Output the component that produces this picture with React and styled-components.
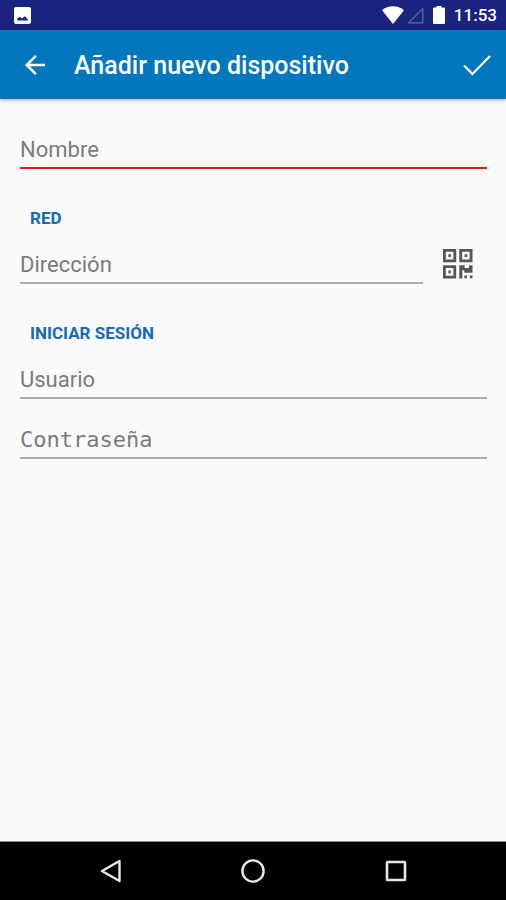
import { useState } from 'react';
import styled, { createGlobalStyle } from 'styled-components';
import { MdArrowBack } from 'react-icons/md';

const GlobalStyle = createGlobalStyle`
  * {
    box-sizing: border-box;
  }

  body {
    margin: 0;
    background: #fafafa;
    font-family: Roboto, sans-serif;
  }
`;

const Screen = styled.div`
  display: flex;
  flex-direction: column;
  min-height: 100vh;
`;

const StatusBar = styled.div`
  display: flex;
  align-items: center;
  justify-content: space-between;
  height: 30px;
  padding: 0 9px 0 14px;
  background: #1a237e;
  color: #fff;
`;

const StatusIcons = styled.div`
  display: flex;
  align-items: center;
`;

const Icon = styled.svg`
  display: block;
  flex: none;
  margin-right: ${({ $gap }) => $gap || 0}px;
`;

const Clock = styled.time`
  font-size: 17px;
  font-weight: 500;
  line-height: 32px;
`;

const AppBar = styled.header`
  display: flex;
  align-items: center;
  height: 69px;
  padding: 0 9px 0 15px;
  background: #0277bd;
  color: #fff;
  box-shadow: 0 1px 4px rgba(0, 0, 0, 0.35);
`;

const IconButton = styled.button`
  display: flex;
  align-items: center;
  justify-content: center;
  flex: none;
  width: 40px;
  height: 40px;
  padding: 0;
  border: 0;
  background: none;
  color: inherit;
  cursor: pointer;
`;

const Title = styled.h1`
  flex: 1;
  margin: 0;
  padding: 2px 0 0 19px;
  font-size: 25px;
  font-weight: 500;
  line-height: 40px;
`;

const Form = styled.form`
  flex: 1;
  padding: 30px 19px 30px 20px;
`;

const Field = styled.input`
  display: block;
  flex: 1;
  width: 100%;
  min-width: 0;
  height: 40px;
  padding: 2px 0 0;
  border: 0;
  border-bottom: 2px solid ${({ $invalid }) => ($invalid ? '#e01b1b' : '#acacac')};
  border-radius: 0;
  outline: none;
  background: none;
  color: #212121;
  font-family: ${({ $mono }) => ($mono ? "'DejaVu Sans Mono', monospace" : 'Roboto, sans-serif')};
  font-size: 22px;

  &::placeholder {
    color: #7a7a7a;
    opacity: 1;
  }

  & + & {
    margin-top: 20px;
  }
`;

const SectionTitle = styled.h2`
  margin: 37px 10px 14px;
  color: #1469b8;
  font-size: 17px;
  font-weight: 700;
  line-height: 24px;
`;

const AddressRow = styled.div`
  display: flex;
  align-items: center;
  gap: 15px;
  padding-right: 9px;
  color: #555;
`;

const NavBar = styled.nav`
  display: flex;
  height: 59px;
  padding: 0 39px 0 40px;
  border-top: 1px solid #8a8a8a;
  background: #000;
  color: #e8e8e8;
`;

const NavButton = styled.button`
  display: flex;
  flex: 1;
  align-items: center;
  justify-content: center;
  padding: 0;
  border: 0;
  background: none;
  color: inherit;
  cursor: pointer;
`;

const PictureIcon = () => (
  <Icon width="17" height="17" viewBox="0 0 17 17">
    <rect width="17" height="17" rx="2" fill="#fff" />
    <path d="M3.2 13.5v-2L6 9.8l2 1.8 2.6-2.4 3.2 3v1.3z" fill="#1a237e" />
  </Icon>
);

const WifiIcon = () => (
  <Icon width="22" height="18" viewBox="0 0 22 18" $gap={3}>
    <path d="M11 18 0 4.2C3 1.6 6.8.3 11 .3s8 1.3 11 3.9z" fill="#fff" />
  </Icon>
);

const SignalIcon = () => (
  <Icon width="17" height="17" viewBox="0 0 17 17" $gap={9}>
    <path d="M15.8 1.6v14.2H1.6z" fill="none" stroke="#6065ab" strokeWidth="1.3" />
  </Icon>
);

const BatteryIcon = () => (
  <Icon width="12" height="18" viewBox="0 0 12 18" $gap={9}>
    <path d="M3.5 0h5v1.4H11a1 1 0 0 1 1 1V17a1 1 0 0 1-1 1H1a1 1 0 0 1-1-1V2.400a1 1 0 0 1 1-1h2.500z" fill="#fff" />
  </Icon>
);

const CheckIcon = () => (
  <Icon width="28" height="22" viewBox="0 0 28 22">
    <path d="m1 11.500 8.500 8.500L27 2" fill="none" stroke="currentColor" strokeWidth="2.2" />
  </Icon>
);

const QrIcon = () => (
  <Icon width="30" height="30" viewBox="0 0 30 30">
    <g fill="none" stroke="currentColor" strokeWidth="2.8">
      <path d="M1.4 1.4h10.4v10.4H1.4zM17.700 1.400h10.400v10.400H17.700zM1.400 17.700h10.400v10.400H1.400z" />
    </g>
    <g fill="currentColor">
      <path d="M5.300 5.300h2.600v2.600H5.300zM21.600 5.300h2.600v2.600h-2.600zM5.300 21.600h2.600v2.600H5.300z" />
      <path d="M16.300 16.300h5.300V19h4.400v-2.700h3.500v7.500h-8.200v-2.600h-2v8.300h-3z" />
      <path d="M21.300 26.600H24v2.700h-2.700zM26.800 26.600h2.700v2.700h-2.700z" />
    </g>
  </Icon>
);

const App = () => {
  const [device, setDevice] = useState({ name: '', address: '', user: '', password: '' });

  const bind = (key) => ({
    name: key,
    value: device[key],
    onChange: (e) => setDevice({ ...device, [key]: e.target.value }),
  });

  return (
    <Screen>
      <GlobalStyle />
      <StatusBar>
        <PictureIcon />
        <StatusIcons>
          <WifiIcon />
          <SignalIcon />
          <BatteryIcon />
          <Clock>11:53</Clock>
        </StatusIcons>
      </StatusBar>
      <AppBar>
        <IconButton type="button" aria-label="Atrás">
          <MdArrowBack size={30} />
        </IconButton>
        <Title>Añadir nuevo dispositivo</Title>
        <IconButton type="submit" form="device" aria-label="Guardar">
          <CheckIcon />
        </IconButton>
      </AppBar>
      <Form id="device" onSubmit={(e) => e.preventDefault()}>
        <Field {...bind('name')} placeholder="Nombre" aria-label="Nombre" $invalid={!device.name} />
        <SectionTitle>RED</SectionTitle>
        <AddressRow>
          <Field {...bind('address')} placeholder="Dirección" aria-label="Dirección" />
          <IconButton type="button" aria-label="Escanear código QR">
            <QrIcon />
          </IconButton>
        </AddressRow>
        <SectionTitle>INICIAR SESIÓN</SectionTitle>
        <Field {...bind('user')} placeholder="Usuario" aria-label="Usuario" />
        <Field
          {...bind('password')}
          type="password"
          placeholder="Contraseña"
          aria-label="Contraseña"
          $mono
        />
      </Form>
      <NavBar>
        <NavButton type="button" aria-label="Atrás">
          <Icon width="24" height="24" viewBox="0 0 24 24">
            <path d="M20.5 2v20L3 12z" fill="none" stroke="currentColor" strokeWidth="2.4" strokeLinejoin="round" />
          </Icon>
        </NavButton>
        <NavButton type="button" aria-label="Inicio">
          <Icon width="24" height="24" viewBox="0 0 24 24">
            <circle cx="12" cy="12" r="10.6" fill="none" stroke="currentColor" strokeWidth="2.4" />
          </Icon>
        </NavButton>
        <NavButton type="button" aria-label="Recientes">
          <Icon width="24" height="24" viewBox="0 0 24 24">
            <rect x="3" y="3" width="18" height="18" rx="0.5" fill="none" stroke="currentColor" strokeWidth="2.6" />
          </Icon>
        </NavButton>
      </NavBar>
    </Screen>
  );
};

export default App;
